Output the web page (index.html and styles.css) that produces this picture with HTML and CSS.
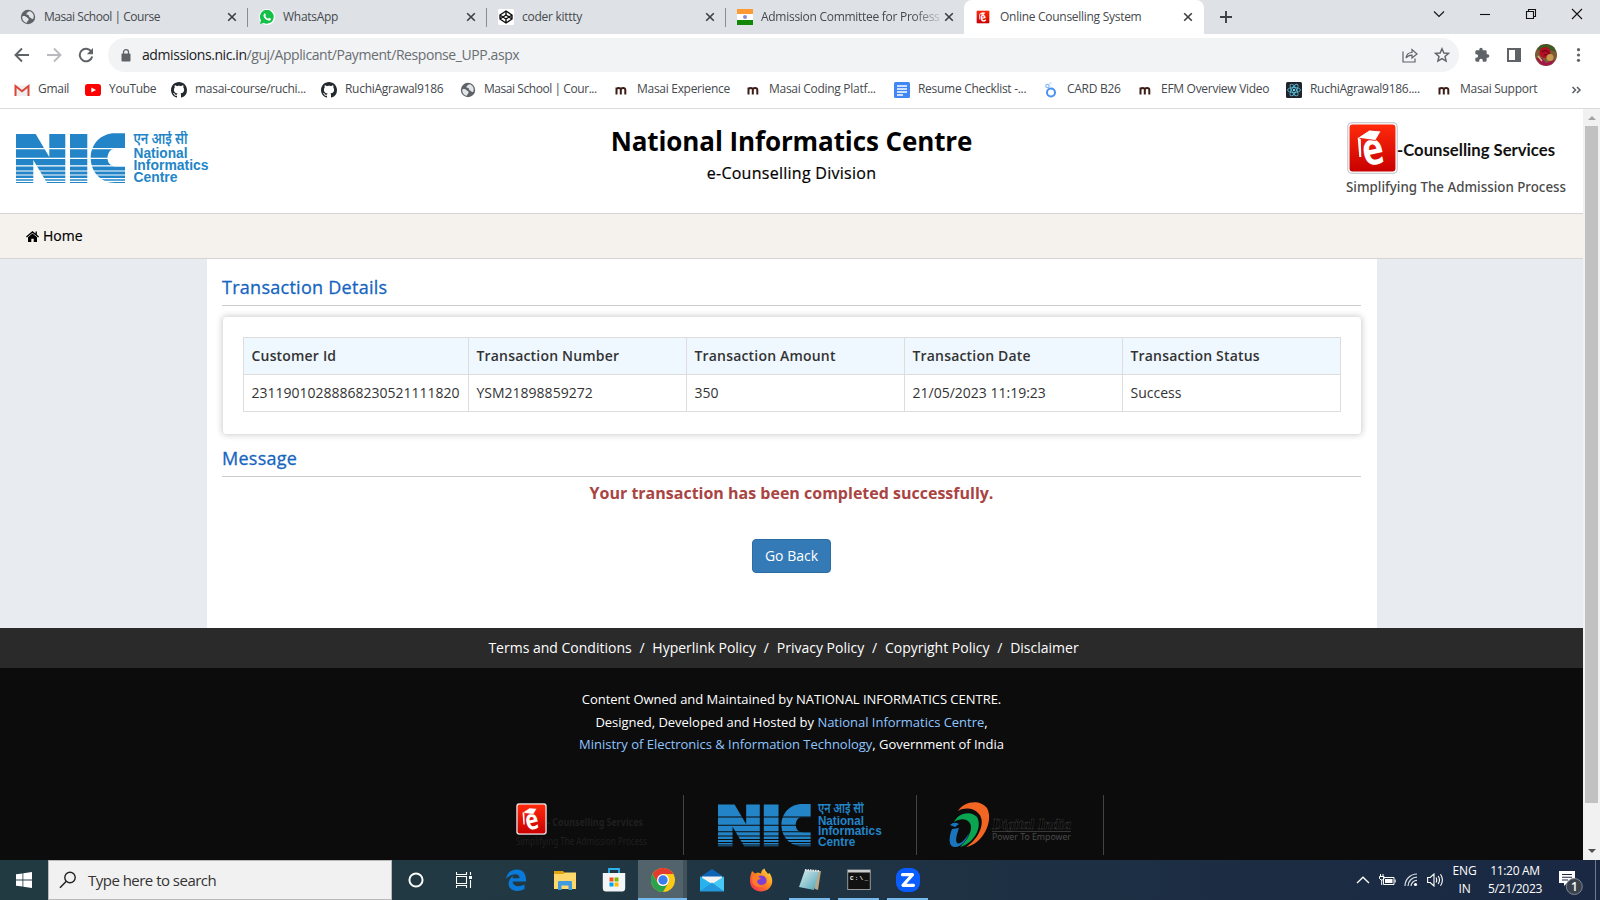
FILE: index.html
```html
<!DOCTYPE html>
<html lang="en">
<head>
<meta charset="utf-8">
<title>Online Counselling System</title>
<link rel="stylesheet" href="styles.css">
</head>
<body>
<svg class="defs" width="0" height="0" aria-hidden="true">
  <defs>
    <linearGradient id="red" x1="0" y1="0" x2="0" y2="1"><stop offset="0" stop-color="#ff2a0c"/><stop offset="1" stop-color="#c90000"/></linearGradient>
    <linearGradient id="fox" x1="1" y1="0" x2="0" y2="1"><stop offset="0" stop-color="#ffe94a"/><stop offset=".45" stop-color="#ff8a1f"/><stop offset="1" stop-color="#f0205c"/></linearGradient>
    <linearGradient id="pad" x1="0" y1="0" x2="1" y2="1"><stop offset="0" stop-color="#d9eef0"/><stop offset="1" stop-color="#4fa3b5"/></linearGradient>
    <mask id="stripes" maskUnits="userSpaceOnUse" x="0" y="0" width="110" height="54">
      <rect width="110" height="54" fill="#fff"/>
      <path d="M0 17.6H110M0 27.4H110M0 34.8H110M0 40H110M0 44H110M0 47.6H110M0 50.4H110" stroke="#000" stroke-width="1.2"/>
    </mask>
    <symbol id="nic" viewBox="0 0 193 54">
      <g fill="#2385c7">
        <g mask="url(#stripes)">
          <path d="M0 3H19.7L33.3 26V3H49.3V52H31L17.3 29V52H0ZM54 3H71.3V52H54ZM109 2.3H99C85 2.3 74.7 13 74.7 27S85 52 99 52H109V35.500H100C94 35.500 91.500 31 91.500 27S94 18 98 18H109Z"/>
        </g>
        <g font-family="Liberation Sans, Arial, sans-serif" font-weight="700" font-size="14.500">
          <text x="117.500" y="12.800" font-family="Noto Sans Devanagari, Noto Sans, Lohit Devanagari, sans-serif" font-size="16" font-weight="600" textLength="54" lengthAdjust="spacingAndGlyphs">एन आई सी</text>
          <text x="117.500" y="26.700" textLength="54" lengthAdjust="spacingAndGlyphs">National</text>
          <text x="117.500" y="39" textLength="75" lengthAdjust="spacingAndGlyphs">Informatics</text>
          <text x="117.500" y="51.300" textLength="44" lengthAdjust="spacingAndGlyphs">Centre</text>
        </g>
      </g>
    </symbol>
    <symbol id="elogo" viewBox="0 0 50 52" preserveAspectRatio="none">
      <rect x=".8" y=".8" width="48.400" height="50.400" rx="4" fill="#fff" stroke="#b9c0c8" stroke-width="1"/>
      <rect x="2.500" y="2.500" width="45" height="47" rx="3" fill="url(#red)"/>
      <text transform="translate(18 44.500) rotate(-12)" x="0" y="0" font-family="Open Sans, sans-serif" font-weight="700" font-size="45" fill="#fff" textLength="21" lengthAdjust="spacingAndGlyphs">e</text>
      <path d="M10 16 22 8 33.500 9 28 18.500Z" fill="#fff" stroke="#e51200" stroke-width=".8"/><path d="M10.500 15.500 12 35H14L13.500 17Z" fill="#fff"/>
    </symbol>
    <symbol id="globe" viewBox="0 0 16 16">
      <circle cx="8" cy="8" r="7.200" fill="#5f6368"/>
      <path d="M2.300 7.500C4 6.500 6 7.500 7 8.500S9 9.500 8.500 11 7 12 7 13.800C4 13.500 2 11 2.300 7.500ZM9.500 2.300C8 3.200 6.500 3.500 6.500 5S9 5.500 9 7 11 8.500 11.500 9.500 13 10 13.400 9.600C14.500 6 12.500 3 9.500 2.300Z" fill="#e3e6e9"/>
    </symbol>
    <symbol id="github" viewBox="0 0 16 16"><path fill="#24292f" d="M8 0C3.580 0 0 3.580 0 8c0 3.540 2.290 6.530 5.470 7.590.4.070.55-.17.55-.38 0-.19-.01-.82-.01-1.490-2.010.37-2.530-.49-2.690-.94-.09-.23-.48-.94-.82-1.130-.28-.15-.68-.52-.01-.53.63-.01 1.080.58 1.230.82.72 1.210 1.870.87 2.330.66.07-.52.28-.87.51-1.070-1.780-.2-3.640-.89-3.640-3.950 0-.87.31-1.590.82-2.150-.08-.2-.36-1.020.08-2.120 0 0 .67-.21 2.200.82.64-.18 1.320-.27 2-.27s1.360.09 2 .27c1.530-1.040 2.200-.82 2.200-.82.44 1.100.16 1.920.08 2.120.51.56.82 1.270.82 2.150 0 3.070-1.870 3.750-3.650 3.950.29.25.54.73.54 1.480 0 1.070-.01 1.930-.01 2.200 0 .21.15.46.55.38A8.010 8.010 0 0 0 16 8c0-4.420-3.580-8-8-8z"/></symbol>
    <symbol id="masai" viewBox="0 0 16 16"><path d="M3.500 12.500V5.500M3.500 7.800C3.500 5.600 7.800 5.200 7.800 7.800V12.500M7.800 7.800C7.800 5.600 12.300 5.200 12.300 7.800V12.500" fill="none" stroke="#3b1c16" stroke-width="2"/></symbol>
    <symbol id="close" viewBox="0 0 10 10"><path d="M1.200 1.200 8.800 8.800M8.800 1.200 1.200 8.800" stroke="#3c4043" stroke-width="1.600"/></symbol>
  </defs>
</svg>

<div class="screen">
  <div class="tabstrip">
    <div class="tab"><svg class="fav"><use href="#globe"/></svg><span class="tab-title tight">Masai School | Course</span><svg class="x"><use href="#close"/></svg></div>
    <div class="tab"><svg class="fav" viewBox="0 0 16 16"><circle cx="8" cy="8" r="8" fill="#fff"/><path d="M1 15 2 11.500A6.900 6.900 0 1 1 4.800 14Z" fill="#12c04a"/><path d="M5.300 4.500C6 4 6.300 4.300 6.900 6 6.900 6.500 6.300 6.700 6.300 7 7 8.500 8 9.300 9.200 9.700L10.100 8.800 12 9.800C11.900 11.500 10.500 12 9.300 11.600 6.500 11 4.500 8.500 4.400 6.500Z" fill="#fff"/></svg><span class="tab-title">WhatsApp</span><svg class="x"><use href="#close"/></svg></div>
    <div class="tab"><svg class="fav" viewBox="0 0 16 16"><rect width="16" height="16" rx="1.500" fill="#fff"/><path d="M8 2 14 6V10L8 14 2 10V6ZM8 2V6M8 10V14M2 6 8 10 14 6M2 10 8 6 14 10" fill="none" stroke="#111" stroke-width="1.400" stroke-linejoin="round"/></svg><span class="tab-title">coder kittty</span><svg class="x"><use href="#close"/></svg></div>
    <div class="tab"><svg class="fav" viewBox="0 0 16 16"><path fill="#ff9933" d="M0 0H16V5H0Z"/><path fill="#fff" d="M0 5H16V11H0Z"/><path fill="#138808" d="M0 11H16V16H0Z"/><circle cx="8" cy="8" r="2" fill="#8b8bd0"/></svg><span class="tab-title fade">Admission Committee for Profess</span><svg class="x"><use href="#close"/></svg></div>
    <div class="tab active"><svg class="fav small"><use href="#elogo"/></svg><span class="tab-title">Online Counselling System</span><svg class="x"><use href="#close"/></svg></div>
    <svg class="plus" viewBox="0 0 12 12"><path d="M6 0V12M0 6H12" stroke="#3c4043" stroke-width="1.900"/></svg>
    <div class="winctl">
      <svg viewBox="0 0 12 12"><path d="M1 3.500 6 8.500 11 3.500"/></svg>
      <svg viewBox="0 0 12 12"><path d="M1 6.500H11"/></svg>
      <svg viewBox="0 0 12 12"><path d="M1.500 3.500H8.500V10.500H1.500ZM3.500 3.500V1.500H10.500V8.500H8.500"/></svg>
      <svg viewBox="0 0 12 12"><path d="M1 1 11 11M11 1 1 11"/></svg>
    </div>
  </div>

  <div class="toolbar">
    <div class="nav">
      <svg viewBox="0 0 16 16"><path d="M15 8H2M8 1.500 1.500 8 8 14.500" fill="none" stroke="#5f6368" stroke-width="1.900"/></svg>
      <svg viewBox="0 0 16 16"><path d="M1 8H14M8 1.500 14.500 8 8 14.500" fill="none" stroke="#b8babd" stroke-width="1.900"/></svg>
      <svg viewBox="0 0 16 16"><path d="M13.300 4.500A6.300 6.300 0 1 0 14.200 9.500" fill="none" stroke="#5f6368" stroke-width="2"/><path d="M15 1V7.200H8.800Z" fill="#5f6368"/></svg>
    </div>
    <div class="omnibox">
      <svg class="lock" viewBox="0 0 10 13"><rect x="0.500" y="4.500" width="9" height="8" rx="1" fill="#5f6368"/><path d="M2.500 5V3.200A2.500 2.500 0 0 1 7.500 3.200V5" fill="none" stroke="#5f6368" stroke-width="1.300"/></svg>
      <span class="url"><b>admissions.nic.in</b>/guj/Applicant/Payment/Response_UPP.aspx</span>
      <svg class="act" viewBox="0 0 16 16"><path d="M1 4.500V15H13V11.500M4 11C4.500 7.500 7 5.500 10 5.500V2.500L15 7 10 11V8.200C7.500 8.200 5.500 9 4 11Z" fill="none" stroke="#5f6368" stroke-width="1.200"/></svg>
      <svg class="act" viewBox="0 0 16 16"><path d="M8 1.700 9.900 6 14.600 6.400 11 9.500 12.100 14 8 11.600 3.900 14 5 9.500 1.400 6.400 6.100 6Z" fill="none" stroke="#5f6368" stroke-width="1.400"/></svg>
    </div>
    <div class="tools">
      <svg viewBox="0 0 24 24"><path fill="#5f6368" d="M20.500 11H19V7c0-1.100-.9-2-2-2h-4V3.500a2.500 2.500 0 0 0-5 0V5H4c-1.100 0-2 .9-2 2v3.800h1.500a2.700 2.700 0 0 1 0 5.400H2V20c0 1.100.9 2 2 2h3.800v-1.500a2.700 2.700 0 0 1 5.400 0V22H17c1.100 0 2-.9 2-2v-4h1.500a2.500 2.500 0 0 0 0-5z"/></svg>
      <svg viewBox="0 0 16 16"><path d="M2 2H14V14H2Z" fill="none" stroke="#5f6368" stroke-width="2"/><path d="M9 1H15V15H9Z" fill="#5f6368"/></svg>
      <svg class="avatar" viewBox="0 0 22 22"><circle cx="11" cy="11" r="11" fill="#7d5a36"/><path d="M2 5 6 1 12 0 19 3 21 8 14 6 6 7Z" fill="#3f5a21"/><path d="M1 14 7 14 11 19 16 17 20 15 17 20 11 22 5 20Z" fill="#a3164a"/><circle cx="10" cy="8.500" r="5.500" fill="#b30f24"/><path d="M7 8Q10 5 13 8T9 11" fill="none" stroke="#7a0717" stroke-width="1.200"/><circle cx="15" cy="13.500" r="3.500" fill="#c59a4e"/><path d="M3 12 7 17" stroke="#dfb98a" stroke-width="1.500"/></svg>
      <svg viewBox="0 0 16 16"><circle cx="8.500" cy="2.700" r="1.600" fill="#5f6368"/><circle cx="8.500" cy="8" r="1.600" fill="#5f6368"/><circle cx="8.500" cy="13.300" r="1.600" fill="#5f6368"/></svg>
    </div>
  </div>

  <div class="bookmarks">
    <div class="bm"><svg viewBox="0 0 16 16"><path d="M1 3.500H15V14H1Z" fill="#eee"/><path d="M1.500 14V4L8 9.300 14.500 4V14" fill="none" stroke="#d9473b" stroke-width="2"/></svg><span>Gmail</span></div>
    <div class="bm"><svg viewBox="0 0 16 16"><rect y="2" width="16" height="12" rx="2.800" fill="#f00"/><path d="M6.300 5.400 11 8 6.300 10.600Z" fill="#fff"/></svg><span>YouTube</span></div>
    <div class="bm"><svg><use href="#github"/></svg><span>masai-course/ruchi...</span></div>
    <div class="bm"><svg><use href="#github"/></svg><span>RuchiAgrawal9186</span></div>
    <div class="bm narrow"><svg><use href="#globe"/></svg><span>Masai School | Cour...</span></div>
    <div class="bm"><svg><use href="#masai"/></svg><span>Masai Experience</span></div>
    <div class="bm"><svg><use href="#masai"/></svg><span>Masai Coding Platf...</span></div>
    <div class="bm"><svg viewBox="0 0 16 16"><rect width="16" height="16" rx="1.500" fill="#4285f4"/><path d="M3 4H13M3 7H13M3 10H13M3 13H9" stroke="#fff" stroke-width="1.500"/></svg><span>Resume Checklist -...</span></div>
    <div class="bm"><svg viewBox="0 0 16 16"><circle cx="8" cy="10.500" r="4" fill="none" stroke="#4a90f5" stroke-width="2"/><circle cx="4.500" cy="4" r="1.700" fill="none" stroke="#8cb9fa" stroke-width="1.200"/><circle cx="7.500" cy="1.300" r="1.200" fill="#d4e5fd"/></svg><span>CARD B26</span></div>
    <div class="bm"><svg><use href="#masai"/></svg><span>EFM Overview Video</span></div>
    <div class="bm"><svg viewBox="0 0 16 16"><rect width="16" height="16" rx="1.500" fill="#20232a"/><g fill="none" stroke="#58b8d4" stroke-width=".9"><ellipse cx="8" cy="8" rx="6.500" ry="2.500"/><ellipse cx="8" cy="8" rx="6.500" ry="2.500" transform="rotate(60 8 8)"/><ellipse cx="8" cy="8" rx="6.500" ry="2.500" transform="rotate(120 8 8)"/></g><circle cx="8" cy="8" r="1.200" fill="#61dafb"/></svg><span>RuchiAgrawal9186....</span></div>
    <div class="bm"><svg><use href="#masai"/></svg><span>Masai Support</span></div>
    <div class="bm"><svg class="more" viewBox="0 0 10 8"><path d="M1 1 4 4 1 7M5.500 1 8.500 4 5.500 7" fill="none" stroke="#5f6368" stroke-width="1.600"/></svg></div>
  </div>

  <div class="viewport">
    <main class="page">
      <header class="site-header">
        <svg class="nic-logo"><use href="#nic"/></svg>
        <div class="site-title"><h1>National Informatics Centre</h1><p>e-Counselling Division</p></div>
        <svg class="ec-logo" viewBox="0 0 222 76">
          <use href="#elogo" x="2" y="0" width="51" height="52"/>
          <text x="52" y="34" textLength="158" lengthAdjust="spacingAndGlyphs" class="ec-name">-Counselling Services</text>
          <text x="1" y="70" textLength="220" lengthAdjust="spacingAndGlyphs" class="ec-tag">Simplifying The Admission Process</text>
        </svg>
      </header>
      <nav class="menu"><svg viewBox="0 0 13 11"><path d="M6.500 2.400 11 6.200V11H7.700V7.700H5.300V11H2V6.200Z"/><path d="M.4 6 6.500.9 12.600 6M10.200.5V4" fill="none" stroke="#000" stroke-width="1.300"/></svg><a>Home</a></nav>

      <section class="content">
        <h2>Transaction Details</h2>
        <div class="card">
          <table>
            <thead><tr><th>Customer Id</th><th>Transaction Number</th><th>Transaction Amount</th><th>Transaction Date</th><th>Transaction Status</th></tr></thead>
            <tbody><tr><td>23119010288868230521111820</td><td>YSM21898859272</td><td>350</td><td>21/05/2023 11:19:23</td><td>Success</td></tr></tbody>
          </table>
        </div>
        <h2 class="second">Message</h2>
        <p class="msg">Your transaction has been completed successfully.</p>
        <button class="btn">Go Back</button>
      </section>

      <footer>
        <div class="links"><a>Terms and Conditions</a><i>/</i><a>Hyperlink Policy</a><i>/</i><a>Privacy Policy</a><i>/</i><a>Copyright Policy</a><i>/</i><a>Disclaimer</a></div>
        <div class="owner">
          <p>Content Owned and Maintained by NATIONAL INFORMATICS CENTRE.</p>
          <p>Designed, Developed and Hosted by <a>National Informatics Centre</a>,</p>
          <p><a>Ministry of Electronics &amp; Information Technology</a>, Government of India</p>
        </div>
        <div class="logos">
          <div class="logo l1"><svg width="134" height="50" viewBox="0 0 134 50">
            <use href="#elogo" x="0" y="0" width="31" height="32"/>
            <text x="31" y="23" textLength="96" lengthAdjust="spacingAndGlyphs" class="dim strong">- Counselling Services</text>
            <text x="0" y="42" textLength="131" lengthAdjust="spacingAndGlyphs" class="dim">Simplifying The Admission Process</text>
          </svg></div>
          <div class="logo l2"><svg width="166" height="46"><use href="#nic"/></svg></div>
          <div class="logo l3"><svg width="124" height="47" viewBox="0 0 124 47">
            <path d="M9 9C15-1 31-3 38 6 45 19 34 42 17 45 30 37 37 20 30 12 25 6 16 5 9 9Z" fill="#f26522"/>
            <path d="M5 20C9 11 22 8 28 15 34 26 24 42 11 45 20 37 25 25 20 20 16 16 10 17 5 20Z" fill="#0aa551"/>
            <path d="M3 27C0 34-1 44 5 45 12 46 18 38 20 31 16 38 11 43 8 41 6 38 8 32 10 26Z" fill="#1b75bc"/>
            <path d="M1 23Q5 19 10 22L6 25Z" fill="#1b75bc"/>
            <text x="43" y="27" textLength="79" lengthAdjust="spacingAndGlyphs" class="di-name">Digital India</text>
            <path d="M43 29.500H122" stroke="#444" stroke-width=".8"/>
            <text x="43" y="38" textLength="79" lengthAdjust="spacingAndGlyphs" class="di-tag">Power To Empower</text>
          </svg></div>
        </div>
      </footer>
    </main>
    <div class="scroll"><svg viewBox="0 0 8 4"><path d="M0 4 4 0 8 4Z" fill="#a3a3a3"/></svg><div class="thumb"></div><svg class="down" viewBox="0 0 8 4"><path d="M0 0 4 4 8 0Z" fill="#505050"/></svg></div>
  </div>

  <div class="taskbar">
    <div class="start"><svg width="16" height="16" viewBox="0 0 16 16"><path d="M0 2.300 6.500 1.400V7.500H0ZM7.300 1.300 16 0V7.500H7.300ZM0 8.400H6.500V14.600L0 13.700ZM7.300 8.400H16V16L7.300 14.700Z" fill="#fff"/></svg></div>
    <div class="search"><svg width="18" height="18" viewBox="0 0 18 18"><circle cx="11" cy="6.500" r="5.200" fill="none" stroke="#222" stroke-width="1.400"/><path d="M7.300 10.300 1 16.700" stroke="#222" stroke-width="1.500"/></svg><span>Type here to search</span></div>
    <div class="cell sm"><svg width="18" height="18" viewBox="0 0 18 18"><circle cx="9" cy="9" r="7.400" fill="none" stroke="#fff" stroke-width="2.200"/></svg></div>
    <div class="cell sm"><svg width="16" height="16" viewBox="0 0 16 16"><path d="M.5 0V2.500H10.500V0M.5 16V13.500H10.500V16M.5 4.500H10.500V11.500H.5ZM14.500 0V3M14.500 8V16" fill="none" stroke="#fff" stroke-width="1.100"/><path d="M13 4H16V7H13Z" fill="#fff"/></svg></div>
    <div class="cell"><svg viewBox="0 0 24 24"><path d="M2 11C3 4 8 1.500 13 1.500 19 1.500 22.500 6 22 13.500H8.500C9 18.500 15 19.500 20.500 16.500V21C15 24 9 23.300 6 20 3 16 5 10 10 7.500 9 8.500 8.500 9.500 8.500 10.200H15.500C15.500 4.500 7 5.500 2 11Z" fill="#0a7ad8"/></svg></div>
    <div class="cell"><svg viewBox="0 0 24 24"><path d="M1 3H10L12 5H23V9H1Z" fill="#e3a30f"/><path d="M1 6H10L12 4.500H23V21H1Z" fill="#ffd86b"/><path d="M5 22V14Q5 13 6 13H18Q19 13 19 14V22H15.500V17.500H8.500V22Z" fill="#3f9ade"/></svg></div>
    <div class="cell"><svg viewBox="0 0 24 24"><path d="M7 6V1H17V6" fill="none" stroke="#2cb3ee" stroke-width="1.800"/><path d="M.8 5H23.200V20Q23.200 23.500 20 23.500H4Q.8 23.500 .8 20Z" fill="#f4f5f6"/><path d="M7.500 9.500H11.500V13.500H7.500Z" fill="#f25022"/><path d="M12.500 9.500H16.500V13.500H12.500Z" fill="#7fba00"/><path d="M7.500 14.500H11.500V18.500H7.500Z" fill="#00a4ef"/><path d="M12.500 14.500H16.500V18.500H12.500Z" fill="#ffb900"/></svg></div>
    <div class="cell current"><svg viewBox="0 0 24 24"><circle cx="12" cy="12" r="12" fill="#fbc916"/><path d="M1.600 6A12 12 0 0 1 22.400 6H12L6.800 15Z" fill="#e33b2e"/><path d="M1.600 6A12 12 0 0 0 12 24L17.200 15A6 6 0 0 1 6.800 15Z" fill="#2ba24c"/><circle cx="12" cy="12" r="6" fill="#fff"/><circle cx="12" cy="12" r="4.700" fill="#3b7ded"/></svg></div>
    <div class="cell"><svg viewBox="0 0 24 24"><path d="M0 9 12 1 24 9V13H0Z" fill="#0d63b5"/><path d="M2 8.500H22V17H2Z" fill="#f2f2f2"/><path d="M0 8.500 12 16 0 23.500Z" fill="#28b3ec"/><path d="M24 8.500 12 16 24 23.500Z" fill="#46c8f5"/><path d="M0 23.500 12 14.500 24 23.500Z" fill="#2498dd"/></svg></div>
    <div class="cell"><svg viewBox="0 0 24 24"><path d="M2 6 3 3 6 5.500 9 4.500 12 5.500C12 3 14 1 15.500 .5 16 3 18 4 19 6L20.500 5C24 10 24.500 16 20 20.500 15 25 7 24 3 19.500 .5 16 .5 10 2 6Z" fill="url(#fox)"/><circle cx="12.500" cy="12.500" r="5" fill="#7d3fd6"/><path d="M3 9C5 7 9 8 12 10.500 10 12 8.500 11.500 8 13.500 8.500 17 13 18 16.500 15.500 14 21 6 20 3.500 15Z" fill="#ff7a2b"/></svg></div>
    <div class="cell open"><svg viewBox="0 0 24 24"><path d="M8 2 23 3 20 22 17 21Z" fill="#b9a889"/><path d="M7 2 21 3 16 22 1 19Z" fill="url(#pad)"/><path d="M7 2 21 3" stroke="#e9e9e9" stroke-width="2" stroke-dasharray="1.500 1"/></svg></div>
    <div class="cell open"><svg viewBox="0 0 24 24"><rect x=".7" y="2" width="22.600" height="19.500" fill="#111" stroke="#999"/><path d="M1 2H23V4.500H1Z" fill="#ccc"/><text x="3" y="12" font-family="Liberation Mono, monospace" font-weight="700" font-size="6" fill="#fff" textLength="18">C:\_</text></svg></div>
    <div class="cell open"><svg viewBox="0 0 24 24"><rect width="24" height="24" rx="9" fill="#0b5cff"/><path d="M6.500 6.700H16.500L7 17.300H17.500" fill="none" stroke="#fff" stroke-width="3.200" stroke-linejoin="round" stroke-linecap="round"/></svg></div>
    <div class="tray">
      <svg width="14" height="8" viewBox="0 0 14 8"><path d="M1 7 7 1.200 13 7" fill="none" stroke="#fff" stroke-width="1.300"/></svg>
      <svg width="17" height="12" viewBox="0 0 17 12"><path d="M4.500 3.500H15V10.500H4.500ZM16.200 5.500V8.500M1.500 0V2.500M4 0V2.500M.5 2.500H5V4.500L3.500 6H2L.5 4.500ZM2.700 6V11" fill="none" stroke="#fff" stroke-width="1"/><path d="M6 5H13.500V9H6Z" fill="#fff"/></svg>
      <svg width="14" height="14" viewBox="0 0 14 14"><g fill="none" stroke="#d9dee6" stroke-width="1.200"><path d="M1 13A12 12 0 0 1 13 1M4 13A9 9 0 0 1 13 4.200M7 13A6 6 0 0 1 13 7.400"/></g><circle cx="11.500" cy="11.500" r="1.600" fill="#fff"/></svg>
      <svg width="17" height="14" viewBox="0 0 17 14"><path d="M.6 4.500H3.200L7 1V13L3.200 9.500H.6ZM9 4.500Q10.500 7 9 9.500M11.200 3Q13.800 7 11.200 11M13.500 1.300Q17.300 7 13.500 12.700" fill="none" stroke="#fff" stroke-width="1.100"/></svg>
      <div class="lang"><span>ENG</span><span>IN</span></div>
      <div class="clock"><span>11:20 AM</span><span>5/21/2023</span></div>
      <svg class="notif" width="26" height="26" viewBox="0 0 26 26"><path d="M1 2H17V14H9L6 17V14H1Z" fill="#fff"/><path d="M4 5.500H14M4 8.200H14M4 11H10" stroke="#1b2a44" stroke-width="1.100"/><circle cx="16.300" cy="17.500" r="8" fill="#3b424c" stroke="#808791"/><text x="16.300" y="21.500" text-anchor="middle" class="count">1</text></svg>
    </div>
  </div>
</div>
</body>
</html>
```
FILE: styles.css
```css
* { box-sizing: border-box; }
body { margin: 0; font-family: "Open Sans", "Noto Sans", sans-serif; color: #333; }
h1, h2, p { margin: 0; }
svg { display: block; flex: none; }
.defs { position: absolute; }
.screen { width: 1600px; height: 900px; display: flex; flex-direction: column; overflow: hidden; background: #fff; }

/* Browser tabs */
.tabstrip { height: 34px; flex: none; display: flex; align-items: flex-start; background: #dee1e6; padding-left: 8px; }
.tab { width: 240px; height: 34px; margin-right: -1px; display: flex; align-items: center; padding: 0 11px 0 12px; font-size: 12px; color: #45494d; position: relative; }
.tab:not(.active):not(:nth-child(4))::after { content: ""; position: absolute; right: 0; top: 8px; width: 1px; height: 19px; background: #8a8d91; }
.tab.active { margin-right: 0; background: #fff; border-radius: 8px 8px 0 0; }
.fav { width: 16px; height: 16px; margin-right: 8px; }
.fav.small { width: 14px; height: 14px; margin-right: 10px; }
.tab-title { flex: 1; white-space: nowrap; letter-spacing: -.28px; line-height: 16px; margin-top: -1px; }
.tab-title.tight { letter-spacing: -.45px; }
.fade { margin-right: 3px; -webkit-mask-image: linear-gradient(90deg, #000 84%, transparent 103%); mask-image: linear-gradient(90deg, #000 84%, transparent 103%); }
.x { width: 10px; height: 10px; }
.plus { width: 12px; height: 12px; margin: 11px 0 0 16px; }
.winctl { margin-left: auto; display: grid; grid-template-columns: repeat(4, 46px); justify-items: center; padding-top: 8px; }
.winctl svg { width: 12px; height: 12px; fill: none; stroke: #111; stroke-width: 1.1; }

/* Toolbar */
.toolbar { height: 42px; flex: none; display: flex; align-items: center; padding-left: 6px; }
.nav { display: grid; grid-template-columns: repeat(3, 32px); justify-items: center; width: 102px; }
.nav svg { width: 16px; height: 16px; }
.omnibox { width: 1351px; height: 34px; border-radius: 17px; background: #f1f3f4; display: flex; align-items: center; padding: 0 9px 0 13px; }
.lock { width: 10px; height: 13px; }
.url { flex: 1; padding-left: 11px; font-size: 14px; letter-spacing: -.42px; margin-top: -1px; color: #6a6e73; }
.url b { font-weight: 400; color: #202124; }
.act { width: 16px; height: 16px; margin-left: 16px; }
.tools { display: grid; grid-template-columns: repeat(4, 32px); justify-items: center; align-items: center; padding-left: 7px; }
.tools svg { width: 16px; height: 16px; }
.tools .avatar { width: 22px; height: 22px; }

.bookmarks { height: 33px; flex: none; padding: 0 0 4px 14px; border-bottom: 1px solid #d9dbde; display: grid; grid-template-columns: 71px 86px 150px 139px 153px 132px 149px 149px 94px 149px 150px 135px 14px; align-items: center; }
.bm { display: flex; align-items: center; gap: 8px; white-space: nowrap; font-size: 12px; letter-spacing: -.29px; color: #45494d; }
.bm.narrow { letter-spacing: -.44px; padding-left: 0; }
.bm span { line-height: 16px; margin-top: -2px; }
.bm svg { width: 16px; height: 16px; }
.bm .more { width: 11px; height: 8px; }

/* Page */
.viewport { height: 751px; flex: none; display: flex; background: #e8ebf0; }
.page { width: 1583px; }
.site-header { height: 105px; background: #fff; border-bottom: 1px solid #d5d5d5; display: grid; grid-template-columns: 1fr auto 1fr; padding: 0 16px; }
.nic-logo { width: 193px; height: 54px; margin-top: 22px; overflow: visible; }
.site-title { text-align: center; color: #000; padding-top: 14px; }
.site-title h1 { font-size: 26px; line-height: 36px; font-weight: 700; letter-spacing: -.1px; }
.site-title p { font-size: 16px; line-height: 28px; letter-spacing: .27px; -webkit-text-stroke: .2px #000; }
.ec-logo { width: 222px; height: 76px; margin-top: 13px; justify-self: end; overflow: visible; }
.ec-name { font: 700 17px Lato, sans-serif; fill: #111; }
.ec-tag { font: 500 15px "Noto Sans", sans-serif; fill: #4a4a4a; }
.menu { height: 45px; background: #f5f2ed; border-bottom: 1px solid #d5d5d5; display: flex; align-items: center; gap: 4px; padding-left: 26px; color: #000; font-size: 14px; -webkit-text-stroke: .2px #000; }
.menu a { margin-top: -2px; }
.menu svg { width: 13px; height: 11px; }

.content { width: 1170px; height: 369px; margin: 0 auto 0 207px; background: #fff; padding: 15px 16px 0 15px; display: flex; flex-direction: column; }
h2 { height: 32px; border-bottom: 1px solid #ccc; font-size: 18px; line-height: 26px; font-weight: 400; color: #1565c0; letter-spacing: .27px; -webkit-text-stroke: .3px #1565c0; }
.card { margin: 10px 0; height: 119px; width: 1140px; border: 1px solid #e4e4e4; border-radius: 4px; padding: 20px; box-shadow: 0 0 6px rgba(0, 0, 0, .2); }
table { width: 1098px; border-collapse: collapse; table-layout: fixed; font-size: 14px; line-height: 20px; }
th, td { border: 1px solid #ddd; padding: 8px 8px 8px 7.500px; height: 37px; text-align: left; white-space: nowrap; }
th:first-child { width: 225px; }
th { background: #f0f8ff; font-weight: 600; letter-spacing: .18px; }
h2.second { line-height: 26px; }
.msg { text-align: center; font-size: 16px; font-weight: 700; line-height: 22px; color: #a94442; padding-top: 5px; }
.btn { align-self: center; margin-top: 35px; width: 79px; height: 34px; border: 1px solid #2e6da4; border-radius: 4px; background: #337ab7; color: #fff; font: 400 14px "Open Sans", sans-serif; padding: 0 0 2px; }

footer { height: 232px; background: #0c0c0c; color: #fff; }
.links { height: 40px; background: #2a2a2a; display: flex; justify-content: center; align-items: center; font-size: 14px; padding: 0 16px 2px 0; }
.links i { font-style: normal; width: 20.700px; text-align: center; }
.owner { padding-top: 20px; text-align: center; font-size: 13px; line-height: 22.500px; letter-spacing: -.02px; }
.owner a { color: #8fc5ff; }
.logos { display: flex; padding: 0 0 0 515px; margin-top: 39.500px; }
.logo { height: 60px; border-right: 1px solid #444; padding-top: 8px; }
.logo svg { overflow: visible; }
.l1 { width: 169px; padding-left: 1px; }
.l2 { width: 233px; padding: 7px 0 0 33px; }
.l3 { width: 187px; padding: 7px 0 0 32px; }
.dim { font: 400 10px "Noto Sans", sans-serif; fill: #1f1f1f; }
.dim.strong { font-weight: 700; }
.di-name { font: italic 700 15px "Liberation Serif", serif; fill: #000; stroke: #3a3a3a; stroke-width: .5px; }
.di-tag { font: 400 8px "Noto Sans", sans-serif; fill: #4a4a4a; }

.scroll { width: 17px; background: #f1f1f1; display: flex; flex-direction: column; align-items: center; padding: 7px 0; }
.scroll svg { width: 8px; height: 4px; }
.thumb { width: 13px; height: 677px; margin-top: 6px; background: #c1c1c1; }
.scroll .down { margin-top: auto; }

/* Taskbar */
.taskbar { height: 40px; flex: none; display: flex; background: linear-gradient(90deg, #213a42 0, #213843 35%, #1d3043 65%, #1a2843 100%); color: #fff; }
.start { width: 48px; display: flex; align-items: center; justify-content: center; }
.search { width: 344px; background: #f1f1f1; border: 1px solid #b8b8b8; color: #333; display: flex; align-items: center; gap: 11px; padding-left: 10px; font-size: 15px; letter-spacing: -.52px; }
.cell { width: 49px; display: flex; align-items: center; justify-content: center; position: relative; }
.cell svg { width: 24px; height: 24px; }
.cell.sm { width: 48px; }
.cell.sm svg { width: 16px; height: 16px; }
.cell.sm + .cell:not(.sm) { margin-left: 3px; }
.cell.current { background: linear-gradient(90deg, #53636b 45px, #42525a 45px); }
.cell.current::after, .cell.open::after { content: ""; position: absolute; bottom: 0; left: 4px; width: 41px; height: 2px; background: #76b9ed; }
.cell.current::after { left: 0; width: 49px; }
.tray { margin-left: auto; width: 245px; margin-right: 4px; border-right: 1px solid #707a8a; display: grid; grid-template-columns: 24px 24px 24px 24px 35px 66px 48px; align-items: center; justify-items: center; font-size: 12px; line-height: 17.500px; letter-spacing: -.2px; }
.lang, .clock { display: flex; flex-direction: column; align-items: center; white-space: nowrap; margin-top: -1px; }
.clock { letter-spacing: -.3px; }
.notif { margin: 4px 2px 0 0; }
.count { font: 600 12px "Open Sans", sans-serif; fill: #fff; }
```
